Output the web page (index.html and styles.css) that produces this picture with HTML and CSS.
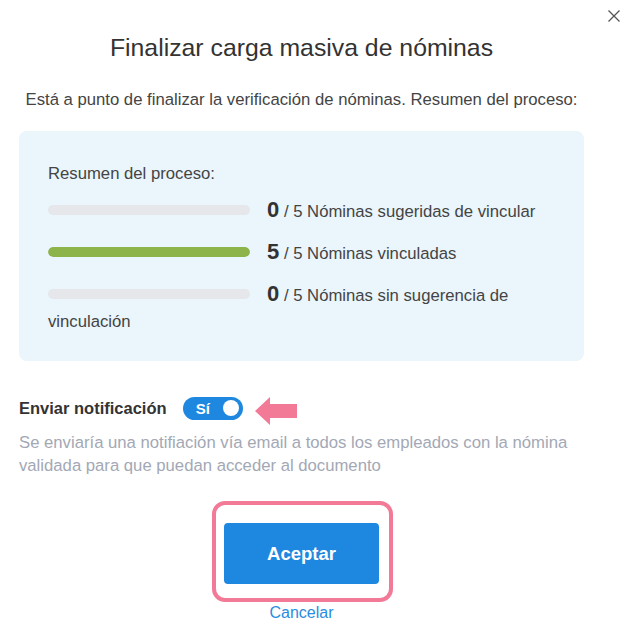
FILE: index.html
```html
<!DOCTYPE html>
<html lang="es">
<head>
    <meta charset="UTF-8">
    <meta name="viewport" content="width=device-width, initial-scale=1.0">
    <title>Finalizar carga masiva de nóminas</title>
    <link rel="stylesheet" href="styles.css">
</head>
<body>

<div class="modal">
    <button class="close-btn" aria-label="Cerrar">
        <svg width="12" height="12" viewBox="0 0 12 12"><path d="M0.5 0.5 L11.5 11.5 M11.5 0.5 L0.5 11.5" stroke="#555" stroke-width="1.3" fill="none"/></svg>
    </button>

    <h2 class="title">Finalizar carga masiva de nóminas</h2>
    <p class="intro">Está a punto de finalizar la verificación de nóminas. Resumen del proceso:</p>

    <div class="summary">
        <p class="summary-title">Resumen del proceso:</p>
        <div class="summary-row">
            <span class="bar"><span class="bar-fill" style="width: 0%"></span></span><b class="count">0</b> / 5 Nóminas sugeridas de vincular
        </div>
        <div class="summary-row">
            <span class="bar"><span class="bar-fill" style="width: 100%"></span></span><b class="count">5</b> / 5 Nóminas vinculadas
        </div>
        <div class="summary-row">
            <span class="bar"><span class="bar-fill" style="width: 0%"></span></span><b class="count">0</b> / 5 Nóminas sin sugerencia de vinculación
        </div>
    </div>

    <div class="notify-row">
        <span class="notify-label">Enviar notificación</span>
        <span class="toggle">
            <span class="toggle-text">Sí</span>
            <span class="toggle-knob"></span>
        </span>
        <svg class="arrow" width="42" height="28" viewBox="0 0 42 28"><path d="M0 14 L15 0 L15 7 L42 7 L42 21 L15 21 L15 28 Z" fill="#f27a97"/></svg>
    </div>
    <p class="notify-help">Se enviaría una notifiación vía email a todos los empleados con la nómina validada para que puedan acceder al documento</p>

    <div class="actions">
        <div class="accept-wrap">
            <button class="accept-btn">Aceptar</button>
            <span class="highlight"></span>
        </div>
        <a href="#" class="cancel-link">Cancelar</a>
    </div>
</div>

</body>
</html>
```

FILE: styles.css
```css
body {
    margin: 0;
    background: white;
    font-family: "Liberation Sans", Arial, sans-serif;
    color: #444;
}
.modal {
    position: relative;
    width: 565px;
    padding: 34px 44px 0 19px;
}
.close-btn {
    position: absolute;
    top: 10px;
    right: 8px;
    padding: 0;
    border: none;
    background: none;
    cursor: pointer;
    line-height: 0;
}
.title {
    margin: 0;
    font-size: 24.8px;
    line-height: 28px;
    font-weight: normal;
    color: #333;
    text-align: center;
}
.intro {
    margin: 28px 0 0;
    font-size: 16.7px;
    line-height: 20px;
    text-align: center;
    color: #444;
}

/* Summary box */
.summary {
    margin-top: 21px;
    padding: 33px 29px 26px;
    background-color: #eaf5fc;
    border-radius: 8px;
}
.summary-title {
    margin: 0 0 15px;
    font-size: 16.7px;
    line-height: 20px;
}
.summary-row {
    font-size: 16.7px;
    line-height: 26px;
    margin-bottom: 16px;
}
.summary-row:last-child {
    margin-bottom: 0;
}
.bar {
    display: inline-block;
    width: 202px;
    height: 10px;
    margin-right: 17px;
    vertical-align: 2px;
    background-color: #e6e7eb;
    border-radius: 5px;
    overflow: hidden;
}
.bar-fill {
    display: block;
    height: 100%;
    background-color: #8db34b;
    border-radius: 5px;
}
.count {
    font-size: 22px;
    line-height: 20px;
    color: #333;
}

/* Notification */
.notify-row {
    display: flex;
    align-items: center;
    margin-top: 35px;
    height: 24px;
}
.notify-label {
    font-size: 16.5px;
    font-weight: bold;
    color: #333;
}
.toggle {
    display: flex;
    align-items: center;
    justify-content: space-between;
    width: 60px;
    height: 23px;
    margin-left: 16px;
    padding: 0 4px 0 13px;
    box-sizing: border-box;
    background-color: #1e88e0;
    border-radius: 12px;
}
.toggle-text {
    color: white;
    font-size: 15px;
    font-weight: bold;
}
.toggle-knob {
    width: 16px;
    height: 16px;
    background: white;
    border-radius: 50%;
}
.arrow {
    margin-left: 12px;
    margin-top: 6px;
}
.notify-help {
    margin: 11px 0 0;
    font-size: 16.7px;
    line-height: 23px;
    color: #a3a8b5;
}

/* Actions */
.actions {
    display: flex;
    flex-direction: column;
    align-items: center;
    margin-top: 46px;
}
.accept-wrap {
    position: relative;
}
.accept-btn {
    display: block;
    width: 155px;
    height: 61px;
    border: none;
    border-radius: 4px;
    background-color: #1e88e0;
    color: white;
    font-family: "Liberation Sans", Arial, sans-serif;
    font-size: 18.5px;
    font-weight: bold;
    cursor: pointer;
}
.highlight {
    position: absolute;
    left: -12px;
    top: -22px;
    width: 181px;
    height: 101px;
    box-sizing: border-box;
    border: 4px solid #f27a97;
    border-radius: 13px;
}
.cancel-link {
    margin-top: 19px;
    font-size: 16px;
    line-height: 20px;
    color: #2a8ce0;
    text-decoration: none;
}
```
